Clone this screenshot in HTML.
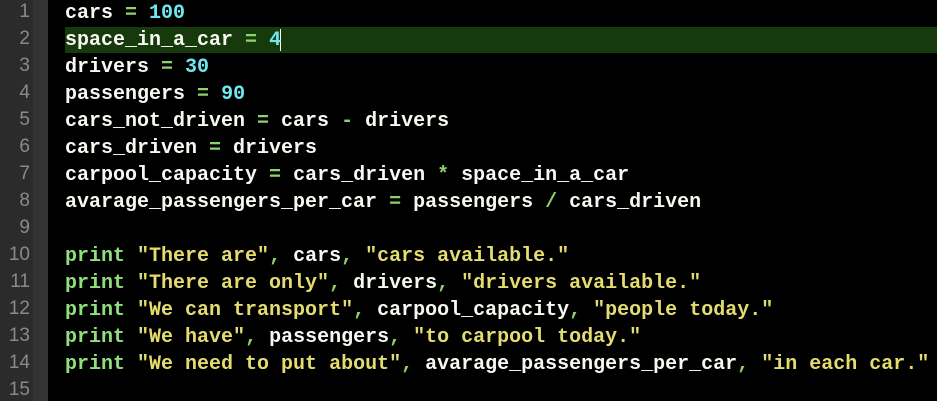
<!DOCTYPE html>
<html><head><style>
body{margin:0;width:937px;height:401px;background:#000;overflow:hidden;position:relative;font-family:"Liberation Mono",monospace;}
.g1{position:absolute;left:0;top:0;width:33px;height:401px;background:#2b2b2b;}
.g2{position:absolute;left:33px;top:0;width:15px;height:401px;background:#333;}
.hl{position:absolute;left:65px;right:0;top:27px;height:26px;background:#173a0c;}
.cur{position:absolute;left:280px;top:29px;width:1px;height:22px;background:#fff;}
.ln{position:absolute;left:0;width:30px;text-align:right;color:#8a8a8a;font-family:"Liberation Sans",sans-serif;font-size:19px;}
.code{position:absolute;left:65px;top:0;font-size:20px;line-height:27px;color:#f8f8f2;white-space:pre;font-weight:bold;}
.o{color:#8bd36a}.n{color:#6ee8f0}.k{color:#8fe07c}.s{color:#e4dc6e}
</style></head><body>
<div class="g1"></div><div class="g2"></div><div class="hl"></div><div class="cur"></div>
<div class="ln" style="top:1px">1</div><div class="ln" style="top:28px">2</div><div class="ln" style="top:55px">3</div><div class="ln" style="top:82px">4</div><div class="ln" style="top:109px">5</div><div class="ln" style="top:136px">6</div><div class="ln" style="top:163px">7</div><div class="ln" style="top:190px">8</div><div class="ln" style="top:217px">9</div><div class="ln" style="top:244px">10</div><div class="ln" style="top:271px">11</div><div class="ln" style="top:298px">12</div><div class="ln" style="top:325px">13</div><div class="ln" style="top:352px">14</div><div class="ln" style="top:379px">15</div>
<div class="code">cars <span class="o">=</span> <span class="n">100</span>
space_in_a_car <span class="o">=</span> <span class="n">4</span>
drivers <span class="o">=</span> <span class="n">30</span>
passengers <span class="o">=</span> <span class="n">90</span>
cars_not_driven <span class="o">=</span> cars <span class="o">-</span> drivers
cars_driven <span class="o">=</span> drivers
carpool_capacity <span class="o">=</span> cars_driven <span class="o">*</span> space_in_a_car
avarage_passengers_per_car <span class="o">=</span> passengers <span class="o">/</span> cars_driven

<span class="k">print</span> <span class="s">"There are"</span><span class="o">,</span> cars<span class="o">,</span> <span class="s">"cars available."</span>
<span class="k">print</span> <span class="s">"There are only"</span><span class="o">,</span> drivers<span class="o">,</span> <span class="s">"drivers available."</span>
<span class="k">print</span> <span class="s">"We can transport"</span><span class="o">,</span> carpool_capacity<span class="o">,</span> <span class="s">"people today."</span>
<span class="k">print</span> <span class="s">"We have"</span><span class="o">,</span> passengers<span class="o">,</span> <span class="s">"to carpool today."</span>
<span class="k">print</span> <span class="s">"We need to put about"</span><span class="o">,</span> avarage_passengers_per_car<span class="o">,</span> <span class="s">"in each car."</span>
</div>
</body></html>
